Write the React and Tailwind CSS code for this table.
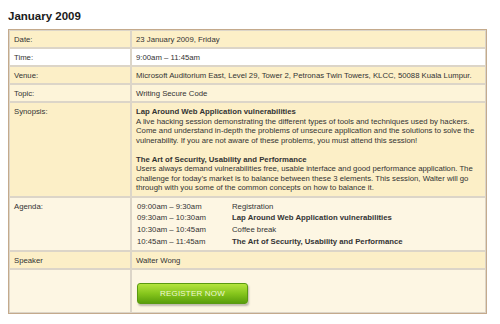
const rows = [
  { label: "Date:", value: "23 January 2009, Friday", bg: "bg-[#fcefc7]" },
  { label: "Time:", value: "9:00am – 11:45am", bg: "bg-white" },
  {
    label: "Venue:",
    value: "Microsoft Auditorium East, Level 29, Tower 2, Petronas Twin Towers, KLCC, 50088 Kuala Lumpur.",
    bg: "bg-[#fcefc7]",
  },
  { label: "Topic:", value: "Writing Secure Code", bg: "bg-[#fdf4d9]" },
];

const agenda = [
  { time: "09:00am – 9:30am", title: "Registration", bold: false },
  { time: "09:30am – 10:30am", title: "Lap Around Web Application vulnerabilities", bold: true },
  { time: "10:30am – 10:45am", title: "Coffee break", bold: false },
  { time: "10:45am – 11:45am", title: "The Art of Security, Usability and Performance", bold: true },
];

function Cell({ bg, className = "", children }) {
  return <div className={`${bg} px-[4px] ${className}`}>{children}</div>;
}

export default function App() {
  return (
    <div className="h-[324px] w-[500px] bg-white font-['Liberation_Sans',Arial,sans-serif] text-[#333]">
      <h1 className="px-2 pt-[9px] text-[11.5px] font-bold leading-[14px] text-[#1a1a1a]">January 2009</h1>

      <div className="mt-[6px] ml-2 grid w-[479px] grid-cols-[120px_1fr] gap-[2px] border border-[#c4aa8c] bg-[#dcd5c8] p-px text-[7.75px]">
        {rows.map((row) => (
          <div key={row.label} className="contents">
            <Cell bg={row.bg} className="pt-[4px] pb-[3px] leading-[9px]">
              {row.label}
            </Cell>
            <Cell bg={row.bg} className="pt-[4px] pb-[3px] leading-[9px]">
              {row.value}
            </Cell>
          </div>
        ))}

        <Cell bg="bg-[#fcefc7]" className="pt-[4px] leading-[9.5px]">
          Synopsis:
        </Cell>
        <Cell bg="bg-[#fcefc7]" className="pt-[4px] pb-[3px] leading-[9.5px]">
          <p className="font-bold">Lap Around Web Application vulnerabilities</p>
          <p>
            A live hacking session demonstrating the different types of tools and techniques used by hackers.
            Come and understand in-depth the problems of unsecure application and the solutions to solve the
            vulnerability. If you are not aware of these problems, you must attend this session!
          </p>
          <p className="mt-[9.5px] font-bold">The Art of Security, Usability and Performance</p>
          <p>
            Users always demand vulnerabilities free, usable interface and good performance application. The
            challenge for today’s market is to balance between these 3 elements. This session, Walter will go
            through with you some of the common concepts on how to balance it.
          </p>
        </Cell>

        <Cell bg="bg-[#fdf6e3]" className="pt-[3px] leading-[11.7px]">
          Agenda:
        </Cell>
        <Cell bg="bg-[#fdf6e3]" className="pt-[3px] pb-[3px] leading-[11.7px]">
          {agenda.map((item) => (
            <div key={item.time} className="flex">
              <span className="w-[96px] shrink-0 pl-px">{item.time}</span>
              <span className={item.bold ? "font-bold" : ""}>{item.title}</span>
            </div>
          ))}
        </Cell>

        <Cell bg="bg-[#fcefc7]" className="pt-[4px] pb-[3px] leading-[9px]">
          Speaker
        </Cell>
        <Cell bg="bg-[#fcefc7]" className="pt-[4px] pb-[3px] leading-[9px]">
          Walter Wong
        </Cell>

        <Cell bg="bg-[#fdf6e3]" />
        <Cell bg="bg-[#fdf6e3]" className="pt-[13px] pb-[8px]">
          <button
            type="button"
            className="ml-px flex h-[21px] w-[111px] items-center justify-center rounded-[3px] border border-[#5a9a10] bg-gradient-to-b from-[#b4e43c] via-[#86c61c] to-[#5a9e0a] text-[8px] tracking-[0.2px] text-[#eef8d4] shadow-[1px_2px_2px_rgba(0,0,0,0.25)]"
          >
            REGISTER NOW
          </button>
        </Cell>
      </div>
    </div>
  );
}
